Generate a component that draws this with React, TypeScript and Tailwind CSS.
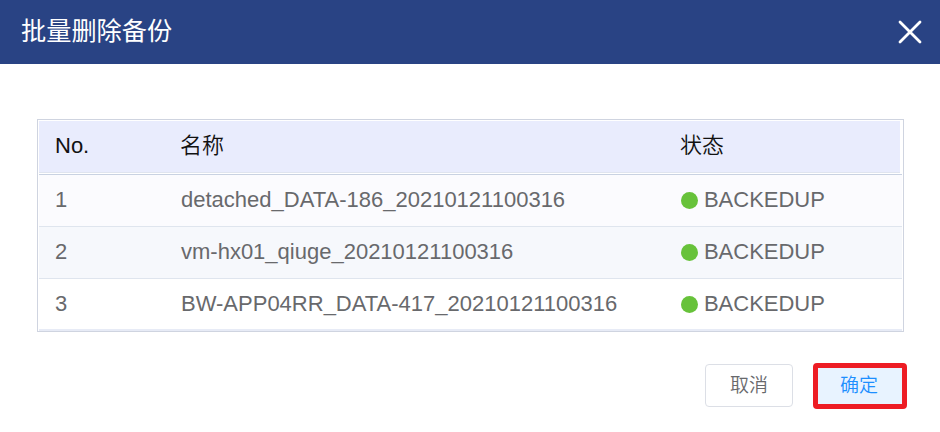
const rows = [
  { no: 1, name: "detached_DATA-186_20210121100316", bg: "bg-[#fbfbfe]", line: "border-b border-[#dfe5ee]" },
  { no: 2, name: "vm-hx01_qiuge_20210121100316", bg: "bg-[#f6f8fc]", line: "border-b border-[#dfe5ee]" },
  { no: 3, name: "BW-APP04RR_DATA-417_20210121100316", bg: "bg-white", line: "border-b-2 border-[#e7ebf6]" },
];

const columns = "grid grid-cols-[125px_500px_1fr] items-center pl-4";

export default function App() {
  return (
    <div className="flex h-[432px] w-[940px] flex-col bg-white font-['Liberation_Sans','Noto_Sans_CJK_SC',sans-serif] text-[22px] text-[#68696c]">
      <header className="flex h-16 items-center justify-between bg-[#294384] pr-[18px] pl-[21px]">
        <h1 className="-mt-0.5 text-[25.2px] leading-8 font-normal text-white">批量删除备份</h1>
        <button aria-label="关闭">
          <svg width="24" height="24" viewBox="0 0 24 24" fill="none" stroke="white" strokeWidth="2.8" strokeLinecap="round">
            <path d="M2 2L22 22M22 2L2 22" />
          </svg>
        </button>
      </header>
      <main className="mt-[55px] ml-[37px] h-[213px] w-[867px] border border-[#cfd4e0] pt-px pr-px pl-px">
        <div className={`${columns} mr-0.5 h-[52px] border-b border-[#dfe4ef] bg-[#e9ecfd] font-[350] text-[#111]`}>
          <span className="-mt-0.5">No.</span>
          <span className="-mt-0.5">名称</span>
          <span className="-mt-0.5">状态</span>
        </div>
        <div className="mt-px border-t border-[#c9d2e2]">
          {rows.map((r) => (
            <div key={r.no} className={`${columns} h-[52px] ${r.bg} ${r.line}`}>
              <span className="-mt-0.5">{r.no}</span>
              <span className="-mt-0.5 pl-px">{r.name}</span>
              <span className="-mt-0.5 flex items-center gap-[5.5px] pl-[1.4px]">
                <i className="mt-0.5 size-[17px] rounded-full bg-[#67c23a]" />
                BACKEDUP
              </span>
            </div>
          ))}
        </div>
      </main>
      <footer className="mt-[31px] mr-[33px] flex justify-end gap-5 text-[19px] font-[350]">
        <button className="mt-px h-[43px] w-[88px] rounded border border-[#dcdfe6] pt-0.5">取消</button>
        <button className="h-[46px] w-[94px] rounded-sm border-5 border-[#ed1c24] bg-[#e8f3ff] pr-0.5 text-[#1d8fff]">确定</button>
      </footer>
    </div>
  );
}
